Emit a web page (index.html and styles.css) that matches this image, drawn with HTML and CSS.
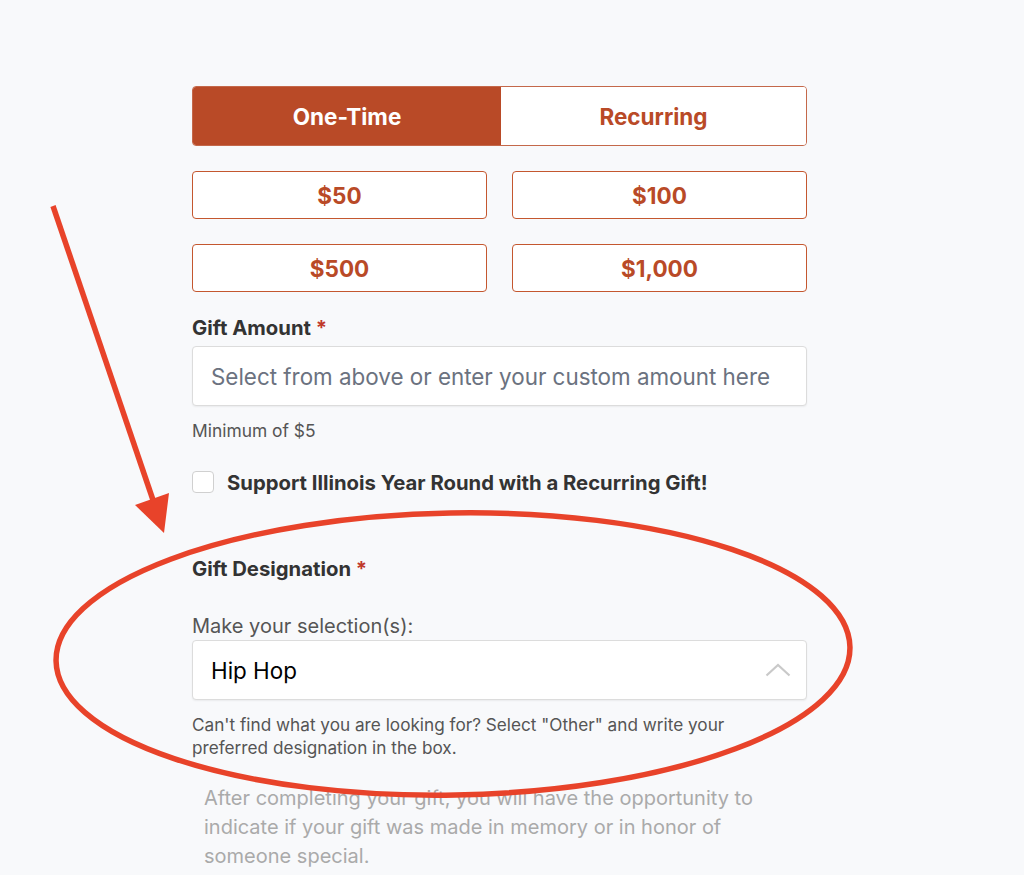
FILE: index.html
```html
<!DOCTYPE html>
<html lang="en">
<head>
<meta charset="utf-8">
<title>Gift Form</title>
<link rel="stylesheet" href="styles.css">
</head>
<body>
<div class="page">
  <form class="form">
    <div class="toggle">
      <button type="button" class="toggle-btn active">One-Time</button>
      <button type="button" class="toggle-btn">Recurring</button>
    </div>
    <div class="amounts">
      <button type="button" class="amount">$50</button>
      <button type="button" class="amount">$100</button>
      <button type="button" class="amount">$500</button>
      <button type="button" class="amount">$1,000</button>
    </div>
    <label class="field-label">Gift Amount <span class="req">*</span></label>
    <div class="input">Select from above or enter your custom amount here</div>
    <p class="hint">Minimum of $5</p>
    <label class="check-row">
      <span class="checkbox"></span>
      <span class="check-label">Support Illinois Year Round with a Recurring Gift!</span>
    </label>
    <label class="field-label designation">Gift Designation <span class="req">*</span></label>
    <p class="sub-label">Make your selection(s):</p>
    <div class="select">
      <span>Hip Hop</span>
      <svg class="chev" width="26" height="14" viewBox="0 0 26 14"><path d="M1.5 12.5 L13 2 L24.5 12.5" fill="none" stroke="#c9c9c9" stroke-width="2.2"/></svg>
    </div>
    <p class="help">Can't find what you are looking for? Select "Other" and write your preferred designation in the box.</p>
    <p class="note">After completing your gift, you will have the opportunity to indicate if your gift was made in memory or in honor of someone special.</p>
  </form>
  <svg class="annotation" width="1024" height="875" viewBox="0 0 1024 875">
    <line x1="53" y1="206" x2="153" y2="500" stroke="#e8432a" stroke-width="5.5"/>
    <polygon points="135,505 169,493 164,533" fill="#e8432a"/>
    <ellipse cx="453" cy="654" rx="397" ry="141" fill="none" stroke="#e8432a" stroke-width="5.5" transform="rotate(-1 453 654)"/>
  </svg>
</div>
</body>
</html>
```
FILE: styles.css
```css
* { box-sizing: border-box; }
html, body { margin: 0; padding: 0; }
body {
  background: #f8f9fb;
  font-family: Inter, "Noto Sans", "Liberation Sans", sans-serif;
  color: #333;
}
.page {
  position: relative;
  width: 1024px;
  height: 875px;
  overflow: hidden;
  padding: 86px 0 0 192px;
}
.form {
  width: 615px;
  display: flex;
  flex-direction: column;
}
.toggle {
  display: flex;
  height: 60px;
  border: 1px solid #c4684a;
  border-radius: 4px;
  overflow: hidden;
  background: #fff;
}
.toggle-btn {
  border: 0;
  background: #fff;
  color: #b94a27;
  font-family: inherit;
  font-weight: 700;
  font-size: 22.5px;
  padding: 0;
}
.toggle-btn.active {
  background: #b94a27;
  color: #fff;
  flex: 0 0 308px;
}
.toggle-btn:last-child { flex: 1; }
.amounts {
  display: grid;
  grid-template-columns: 1fr 1fr;
  gap: 25px;
  margin-top: 25px;
}
.amount {
  height: 48px;
  border: 1px solid #c4572f;
  border-radius: 4px;
  background: #fff;
  color: #b94a27;
  font-family: inherit;
  font-weight: 700;
  font-size: 22.5px;
  padding: 0;
}
.field-label {
  font-weight: 700;
  font-size: 20.3px;
  color: #333;
  margin-top: 24px;
  line-height: 24px;
}
.req { color: #c0392b; }
.input {
  margin-top: 6px;
  height: 60px;
  background: #fff;
  border: 1px solid #dcdcdc;
  border-radius: 4px;
  box-shadow: 0 1px 2px rgba(0,0,0,0.06);
  padding: 0 18px;
  display: flex;
  align-items: center;
  font-size: 22.4px;
  color: #6b7280;
}
.hint {
  margin: 15px 0 0;
  font-size: 17.4px;
  color: #555;
  line-height: 20px;
}
.check-row {
  display: flex;
  align-items: center;
  gap: 13px;
  margin-top: 29px;
  height: 24px;
}
.checkbox {
  width: 22px;
  height: 22px;
  border: 1px solid #d0d0d0;
  border-radius: 4px;
  background: #fff;
}
.check-label {
  font-weight: 700;
  font-size: 20.3px;
  color: #333;
}
.designation { margin-top: 63px; }
.sub-label {
  margin: 33px 0 0;
  font-size: 20px;
  color: #555;
  line-height: 24px;
}
.select {
  margin-top: 2px;
  height: 60px;
  background: #fff;
  border: 1px solid #dcdcdc;
  border-radius: 4px;
  box-shadow: 0 1px 2px rgba(0,0,0,0.06);
  padding: 0 15px 0 18px;
  display: flex;
  align-items: center;
  justify-content: space-between;
  font-size: 22.4px;
  color: #000;
}
.help {
  margin: 13px 0 0;
  font-size: 17.2px;
  line-height: 23px;
  color: #555;
  max-width: 560px;
}
.note {
  margin: 25px 0 0;
  padding-left: 12px;
  font-size: 20px;
  line-height: 29px;
  color: #aaa;
  max-width: 590px;
}
.annotation {
  position: absolute;
  left: 0;
  top: 0;
  pointer-events: none;
}
```
